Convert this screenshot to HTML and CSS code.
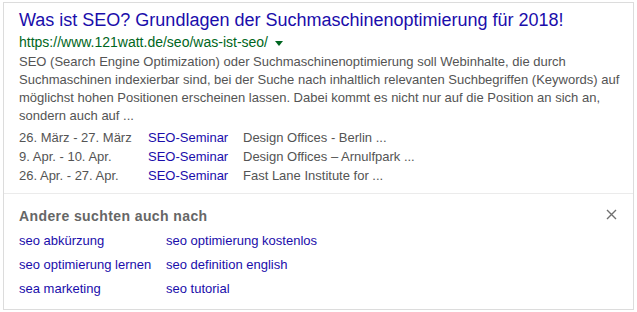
FILE: index.html
```html
<!DOCTYPE html>
<html lang="de">
<head>
    <meta charset="UTF-8">
    <title>Was ist SEO?</title>
    <link rel="stylesheet" href="styles.css">
</head>
<body>
    <div class="card">
        <div class="result">
            <h3 class="title"><a href="#">Was ist SEO? Grundlagen der Suchmaschinenoptimierung für 2018!</a></h3>
            <div class="url">https://www.121watt.de/seo/was-ist-seo/ <span class="arrow"></span></div>
            <div class="snippet">SEO (Search Engine Optimization) oder Suchmaschinenoptimierung soll Webinhalte, die durch Suchmaschinen indexierbar sind, bei der Suche nach inhaltlich relevanten Suchbegriffen (Keywords) auf möglichst hohen Positionen erscheinen lassen. Dabei kommt es nicht nur auf die Position an sich an, sondern auch auf ...</div>
            <table class="events">
                <tr><td class="date">26. März - 27. März</td><td class="name"><a href="#">SEO-Seminar</a></td><td>Design Offices - Berlin ...</td></tr>
                <tr><td class="date">9. Apr. - 10. Apr.</td><td class="name"><a href="#">SEO-Seminar</a></td><td>Design Offices – Arnulfpark ...</td></tr>
                <tr><td class="date">26. Apr. - 27. Apr.</td><td class="name"><a href="#">SEO-Seminar</a></td><td>Fast Lane Institute for ...</td></tr>
            </table>
        </div>
        <div class="related">
            <div class="related-head">
                <span>Andere suchten auch nach</span>
                <span class="close">
                    <svg width="11" height="11" viewBox="0 0 11 11"><path d="M1 1L10 10M10 1L1 10" stroke="#707070" stroke-width="1.4"/></svg>
                </span>
            </div>
            <div class="related-links">
                <a href="#">seo abkürzung</a>
                <a href="#">seo optimierung kostenlos</a>
                <a href="#">seo optimierung lernen</a>
                <a href="#">seo definition english</a>
                <a href="#">sea marketing</a>
                <a href="#">seo tutorial</a>
            </div>
        </div>
    </div>
</body>
</html>
```

FILE: styles.css
```css
body {
    margin: 2px 3px 0;
    background: white;
    font-family: Arial, "Liberation Sans", sans-serif;
    color: #545454;
}
a {
    color: #1a0dab;
    text-decoration: none;
}
.card {
    width: 631px;
    box-sizing: border-box;
    border: 1px solid #dcdcdc;
}
.result {
    padding: 6px 4px 8px 15px;
    border-bottom: 1px solid #ebebeb;
}
.title {
    margin: 0;
    font-size: 18px;
    font-weight: normal;
    line-height: 22px;
}
.url {
    color: #006621;
    font-size: 14px;
    line-height: 18px;
    margin-top: 2px;
}
.arrow {
    display: inline-block;
    border-top: 5px solid #006621;
    border-left: 4px solid transparent;
    border-right: 4px solid transparent;
    vertical-align: middle;
    margin-left: 3px;
}
.snippet {
    font-size: 13px;
    line-height: 18px;
    margin-top: 2px;
}
.events {
    border-collapse: collapse;
    font-size: 13px;
    line-height: 19px;
    margin-top: 3px;
}
.events td {
    padding: 0;
    white-space: nowrap;
}
.events td.date {
    width: 129px;
}
.events td.name {
    width: 95px;
}
.related {
    padding: 12px 16px 8px 15px;
}
.related-head {
    display: flex;
    justify-content: space-between;
    align-items: center;
    font-size: 14px;
    font-weight: bold;
    letter-spacing: 0.4px;
    color: #666;
    line-height: 20px;
}
.close {
    display: flex;
    margin-top: -3px;
}
.related-links {
    display: grid;
    grid-template-columns: 147px auto;
    font-size: 13px;
    line-height: 24px;
    margin-top: 3px;
}
```
